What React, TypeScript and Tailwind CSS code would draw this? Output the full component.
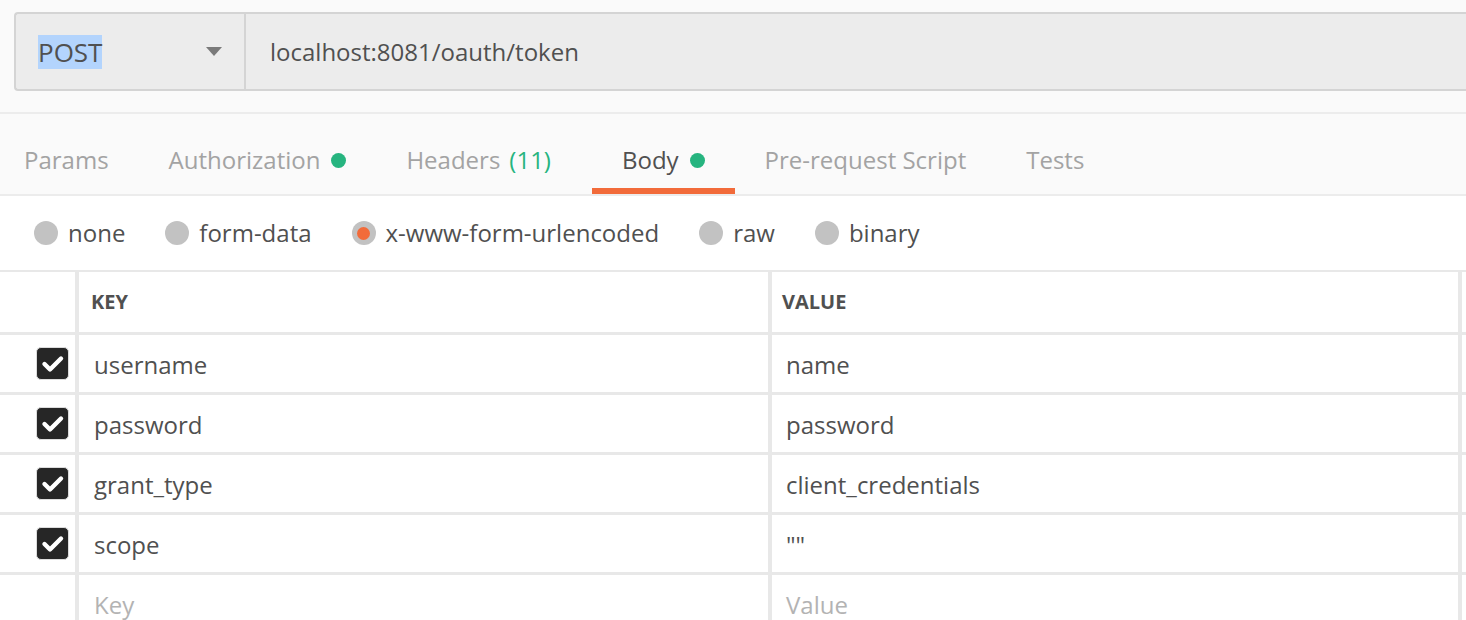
import React from 'react';

const tabs = [
  { label: 'Params' },
  { label: 'Authorization', dot: true },
  { label: 'Headers', count: '(11)' },
  { label: 'Body', dot: true, active: true },
  { label: 'Pre-request Script' },
  { label: 'Tests' },
];

const bodyTypes = [
  { label: 'none' },
  { label: 'form-data' },
  { label: 'x-www-form-urlencoded', checked: true },
  { label: 'raw' },
  { label: 'binary' },
];

const rows = [
  { key: 'username', value: 'name' },
  { key: 'password', value: 'password' },
  { key: 'grant_type', value: 'client_credentials' },
  { key: 'scope', value: '""' },
];

function Checkbox() {
  return (
    <span className="flex h-[33px] w-[33px] items-center justify-center rounded-[5px] border border-[#dcdcdc] bg-[#262626]">
      <svg width="31" height="31" viewBox="0 0 31 31" fill="none">
        <path d="M7.5 16 L13 21.5 L24 10.5" stroke="white" strokeWidth="4.4" strokeLinecap="round" strokeLinejoin="round" />
      </svg>
    </span>
  );
}

function Radio({ checked }: { checked?: boolean }) {
  return (
    <span className="flex h-[24px] w-[24px] items-center justify-center rounded-full bg-[#c2c2c2]">
      {checked && <span className="h-[13px] w-[13px] rounded-full bg-[#f26b3a]" />}
    </span>
  );
}

function Rad({ k, v, placeholder = false }: { k: React.ReactNode; v: React.ReactNode; placeholder?: boolean }) {
  const färg = placeholder ? 'text-[#b3b3b3]' : 'text-[#505050]';
  return (
    <div className="flex h-[60px] border-b-[3px] border-[#e8e8e8]">
      <div className="flex w-[75px] shrink-0 items-center justify-end pr-[6px]">
        {!placeholder && <Checkbox />}
      </div>
      <div className={`flex w-[693px] shrink-0 items-center border-l-4 border-[#e8e8e8] px-[15px] pt-[2px] text-[24px] ${färg}`}>
        {k}
      </div>
      <div className={`flex w-[694px] shrink-0 items-center border-x-4 border-[#e8e8e8] px-[14px] pt-[2px] text-[24px] ${färg}`}>
        {v}
      </div>
    </div>
  );
}

export default function App() {
  return (
    <div className="h-[620px] w-[1466px] overflow-hidden bg-white" style={{ fontFamily: '"Open Sans", sans-serif' }}>
      {/* adressrad */}
      <div className="h-[114px] border-b-2 border-[#ececec] bg-[#fafafa] pl-[14px] pt-[12px]">
        <div className="flex h-[79px] rounded-l-[4px] border-y-2 border-l-2 border-[#d4d4d4] bg-[#ececec]">
          <div className="flex w-[230px] shrink-0 items-center justify-between border-r-2 border-[#d4d4d4] pl-[22px] pr-[22px]">
            <span className="bg-[#b3d4fd] text-[26px] leading-[34px] text-[#505050]">POST</span>
            <svg width="16" height="9" viewBox="0 0 16 9">
              <path d="M0 0 H16 L8 9 Z" fill="#7a7a7a" />
            </svg>
          </div>
          <div className="flex items-center pl-[24px] text-[24px] text-[#505050]">localhost:8081/oauth/token</div>
        </div>
      </div>

      {/* flikar */}
      <div className="flex h-[82px] border-b-2 border-[#ececec] bg-[#fafafa] pl-[24px]">
        {tabs.map((t, i) => (
          <div
            key={t.label}
            className={`flex items-center border-b-[6px] pt-[18px] text-[24px] ${i === 0 ? 'pr-[30px]' : 'px-[30px]'} ${
              t.count ? 'mr-[11px]' : ''
            } ${t.active ? 'border-[#f26b3a] text-[#505050]' : 'border-transparent text-[#a3a3a3]'}`}
          >
            {t.label}
            {t.count && <span className="ml-[9px] text-[#26b47f]">{t.count}</span>}
            {t.dot && <span className="ml-[11px] h-[15px] w-[15px] rounded-full bg-[#26b47f]" />}
          </div>
        ))}
      </div>

      {/* body-typ */}
      <div className="flex h-[74px] items-center gap-[40px] pl-[34px]">
        {bodyTypes.map((b) => (
          <label key={b.label} className="flex items-center gap-[10px] text-[24px] text-[#505050]">
            <Radio checked={b.checked} />
            {b.label}
          </label>
        ))}
      </div>

      {/* tabell */}
      <div className="border-t-2 border-[#e8e8e8]">
        <div className="flex h-[63px] border-b-[3px] border-[#e8e8e8]">
          <div className="w-[75px] shrink-0" />
          <div className="flex w-[693px] shrink-0 items-center border-l-4 border-[#e8e8e8] px-[12px] text-[20px] font-bold text-[#505050]">
            KEY
          </div>
          <div className="flex w-[694px] shrink-0 items-center border-x-4 border-[#e8e8e8] px-[10px] text-[20px] font-bold text-[#505050]">
            VALUE
          </div>
        </div>
        {rows.map((r) => (
          <Rad key={r.key} k={r.key} v={r.value} />
        ))}
        <Rad k="Key" v="Value" placeholder />
      </div>
    </div>
  );
}
